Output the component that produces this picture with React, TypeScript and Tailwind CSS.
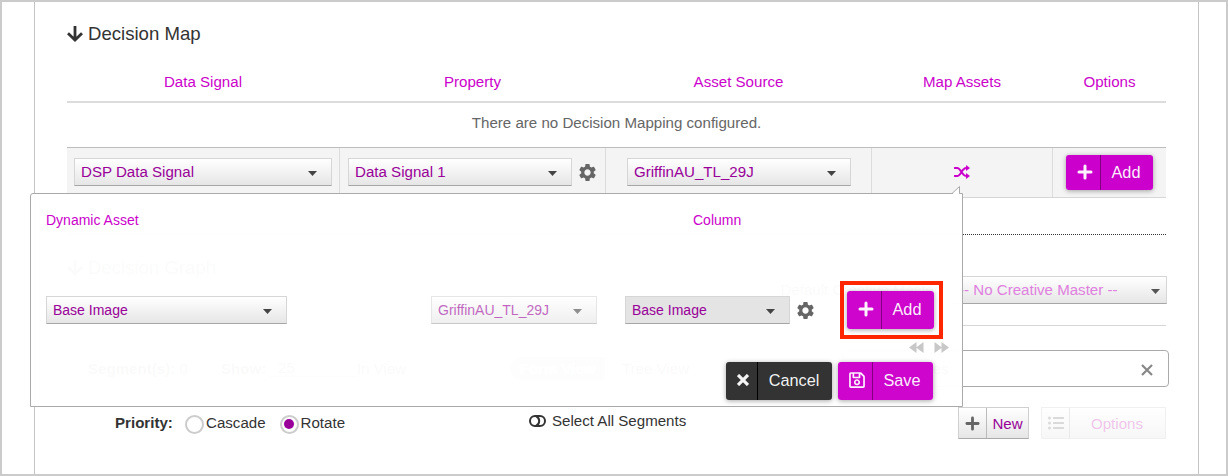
import React from "react";
import clsx from "clsx";
import { MdSettings } from "react-icons/md";
import { FaListUl, FaRegSave } from "react-icons/fa";

function ArrowDown() {
  return (
    <svg width="16" height="17" viewBox="0 0 16 17" fill="none" stroke="currentColor" strokeWidth="2.8">
      <path d="M8 0V14M1 7.3L8 14.1L15 7.3" />
    </svg>
  );
}

function Plus({ className }: { className?: string }) {
  return (
    <svg width="16" height="16" viewBox="0 0 16 16" className={className} fill="none" stroke="currentColor" strokeWidth="3" strokeLinecap="round">
      <path d="M8 2V14M2 8H14" />
    </svg>
  );
}

function Shuffle() {
  return (
    <svg width="16" height="14" viewBox="0 0 16 14" fill="none" stroke="currentColor" strokeWidth="2">
      <path d="M0 3H3.2C6.8 3 8 11 12 11H13M0 11H3.2C6.8 11 8 3 12 3H13" />
      <path d="M12 0L16 3L12 6ZM12 8L16 11L12 14Z" fill="currentColor" stroke="none" />
    </svg>
  );
}

function Cross({ className, width = 2 }: { className?: string; width?: number }) {
  return (
    <svg width="12" height="12" viewBox="0 0 12 12" className={className} fill="none" stroke="currentColor" strokeWidth={width}>
      <path d="M1 1L11 11M11 1L1 11" />
    </svg>
  );
}

function ToggleIcon() {
  return (
    <svg width="17" height="12" viewBox="0 0 17 12" fill="none" stroke="currentColor" strokeWidth="2">
      <rect x="1" y="1" width="15" height="10" rx="5" />
      <path d="M7 1C9.2 2.2 10.2 4 10.2 6S9.2 9.8 7 11" />
    </svg>
  );
}

function Select({
  label,
  className,
  disabled,
  flat,
}: {
  label: string;
  className?: string;
  disabled?: boolean;
  flat?: boolean;
}) {
  return (
    <div
      className={clsx(
        "flex h-7 shrink-0 items-center justify-between border border-[#d6d6d6] border-b-[#a6a6a6] pr-[14px] pl-[6px] text-[#990099]",
        flat ? "bg-[#e4e4e4]" : "bg-linear-to-b from-white to-[#e6e6e6]",
        disabled && "opacity-60",
        className
      )}
    >
      <span>{label}</span>
      <svg width="9" height="5" viewBox="0 0 9 5" className="mt-[3px]" fill="#444">
        <path d="M0 0H9L4.5 5Z" />
      </svg>
    </div>
  );
}

function Button({
  icon,
  label,
  className,
  divider,
}: {
  icon: React.ReactNode;
  label: string;
  className?: string;
  divider: string;
}) {
  return (
    <div className={clsx("flex shrink-0 items-stretch rounded-[3px] text-[16.3px] text-white/95 shadow-[0_1px_5px_rgba(0,0,0,0.35)]", className)}>
      <div className={clsx("flex shrink-0 items-center justify-center border-r pb-0.5", divider)}>{icon}</div>
      <div className="flex flex-1 items-center justify-center pr-[2px]">{label}</div>
    </div>
  );
}

function DecisionMap() {
  return (
    <section>
      <h2 className="flex h-[36px] items-center gap-[5px] text-[18.6px] text-[#333]">
        <ArrowDown />
        Decision Map
      </h2>
      <div className="mt-[11px] grid h-[40px] grid-cols-[273px_266px_266px_181px_113px] items-center border-b-2 border-[#dcdcdc] text-center text-[#cc00cc]">
        <div className="pr-px">Data Signal</div>
        <div className="pr-px">Property</div>
        <div className="pr-px">Asset Source</div>
        <div className="pr-px">Map Assets</div>
        <div>Options</div>
      </div>
      <p className="flex h-[44px] items-center justify-center pb-[5px] text-[#666]">
        There are no Decision Mapping configured.
      </p>
      <div className="grid h-[51px] grid-cols-[273px_266px_266px_181px_113px] border-y border-t-[#bdbdbd] border-b-[#d6d6d6] bg-[#f4f4f4]">
        <div className="border-r border-[#dcdcdc] pt-[10px] pl-[7px]">
          <Select label="DSP Data Signal" className="w-[258px]" />
        </div>
        <div className="flex gap-[5px] border-r border-[#dcdcdc] pt-[10px] pl-[8px]">
          <Select label="Data Signal 1" className="w-[224px]" />
          <MdSettings size={21} className="mt-[4px] text-[#666]" />
        </div>
        <div className="border-r border-[#dcdcdc] pt-[10px] pl-[21px]">
          <Select label="GriffinAU_TL_29J" className="w-[224px]" />
        </div>
        <div className="flex justify-center border-r border-[#dcdcdc] pt-[17px] text-[#cc00cc]">
          <Shuffle />
        </div>
        <div className="pt-[7px] pl-[13px]">
          <Button
            icon={<Plus />}
            label="Add"
            className="h-[35px] w-[87px] bg-[#cc00cc]"
            divider="w-[35px] border-[#800080] pl-1"
          />
        </div>
      </div>
    </section>
  );
}

function Radio({ label, checked }: { label: string; checked?: boolean }) {
  return (
    <label className="flex items-center gap-[2px]">
      <span className="mt-0.5 flex size-[19px] items-center justify-center rounded-full border-[2.5px] border-[#ccc] bg-white">
        {checked && <span className="size-[10px] rounded-full bg-[#990099]" />}
      </span>
      <span>{label}</span>
    </label>
  );
}

function DecisionGraph() {
  return (
    <section className="mt-[36px] border-t border-dotted border-[#333]">
      <h2 className="mt-[20px] flex h-[26px] items-center gap-[5px] text-[18.6px] text-[#333]">
        <ArrowDown />
        Decision Graph
      </h2>
      <div className="-mt-[5px] flex h-[28px] items-center justify-end gap-[14px]">
        <span>Default Creative Master</span>
        <div className="-mr-px flex h-7 w-[214px] items-center justify-between border border-[#d6d6d6] border-b-[#a6a6a6] bg-linear-to-b from-white to-[#e6e6e6] pr-[6px] pl-[5px] text-[#df80df]">
          <span>-- No Creative Master --</span>
          <svg width="9" height="5" viewBox="0 0 9 5" className="mt-0.5" fill="#555">
            <path d="M0 0H9L4.5 5Z" />
          </svg>
        </div>
      </div>
      <div className="mt-[21px] border-b border-[#d6d6d6]" />
      <div className="-mr-[3px] mt-[24px] flex h-[37px] items-center pl-[21px]">
        <span className="w-[133px] shrink-0"><b>Segment(s):</b> 0</span>
        <b className="w-[49px] shrink-0">Show:</b>
        <span className="w-[87px] shrink-0 border-b border-[#999] pl-2">25</span>
        <span className="w-[153px] shrink-0">In View</span>
        <span className="flex h-[23px] w-[95px] shrink-0 items-center justify-center rounded-l-full bg-[#aaa] font-bold text-white">Form View</span>
        <span className="w-[80px] shrink-0 pl-[17px]">Tree View</span>
        <div className="ml-auto flex h-full w-[327px] items-center justify-between rounded-[4px] border border-[#aaa] pr-[15px] pl-[15px]">
          <span>Search Rules</span>
          <Cross className="mt-0.5 text-[#888]" width={2.2} />
        </div>
      </div>
      <div className="mt-[20px] flex h-[32px] items-center pl-[48px] text-[#333]">
        <b className="w-[70px]">Priority:</b>
        <div className="flex w-[344px] gap-[14px]">
          <Radio label="Cascade" />
          <Radio label="Rotate" checked />
        </div>
        <div className="mb-1 flex flex-1 items-center gap-[6px]">
          <ToggleIcon />
          <span>Select All Segments</span>
        </div>
        <div className="mr-3 flex h-8 w-[71px] border border-[#d0d0d0] border-b-[#aaa] bg-linear-to-b from-white to-[#e6e6e6] text-[#990099]">
          <div className="flex w-[28px] items-center justify-center border-r border-[#bbb] text-[#666]">
            <Plus className="size-[15px]" />
          </div>
          <div className="flex flex-1 items-center justify-center pt-0.5">New</div>
        </div>
        <div className="flex h-8 w-[125px] border border-[#d0d0d0] bg-linear-to-b from-white to-[#e6e6e6] text-[#cc44bb] opacity-30">
          <div className="flex w-[28px] items-center justify-center border-r border-[#bbb] text-[#888]">
            <FaListUl size={16} />
          </div>
          <div className="flex flex-1 items-center justify-center pt-0.5 pr-px">Options</div>
        </div>
      </div>
    </section>
  );
}

function AssetPopover() {
  return (
    <div className="absolute top-[193px] left-[30px] h-[214px] w-[933px] rounded-tl-[3px] border border-[#aaa] bg-white/98 text-sm">
      <svg width="10" height="9" viewBox="0 0 10 9" className="absolute -top-[8px] right-0" fill="none">
        <path d="M0 8.5L7.5 1V9H0Z" fill="white" />
        <path d="M0 7.5L7.5 0.5V7.5H10" stroke="#aaa" />
      </svg>
      <div className="flex h-[52px] items-center pl-[15px] text-[#cc00cc]">
        <div className="w-[647px]">Dynamic Asset</div>
        <div>Column</div>
      </div>
      <div className="mt-[35px] flex h-[58px] items-center pl-[15px]">
        <Select label="Base Image" className="w-[241px]" />
        <Select label="GriffinAU_TL_29J" className="ml-[144px] w-[166px]" disabled />
        <Select label="Base Image" className="ml-[28px] w-[165px]" flat />
        <MdSettings size={21} className="ml-[5px] text-[#666]" />
        <div className="ml-[24px] flex h-[58px] w-[103px] items-center justify-center border-4 border-[#ff2600] pr-0.5">
          <Button
            icon={<Plus />}
            label="Add"
            className="h-[38px] w-[87px] bg-[#cc00cc]/98"
            divider="w-[35px] border-[#800080] pl-1"
          />
        </div>
      </div>
      <div className="mt-[3px] flex h-[11px] justify-end gap-[10px] pr-[13px] text-[#c8c8c8]">
        <svg width="15" height="11" viewBox="0 0 15 11" fill="currentColor">
          <path d="M0 5.5L7.5 0V11ZM7 5.5L14.5 0V11Z" />
        </svg>
        <svg width="15" height="11" viewBox="0 0 15 11" fill="currentColor">
          <path d="M0.5 0L8 5.5L0.5 11ZM7.5 0L15 5.5L7.5 11Z" />
        </svg>
      </div>
      <div className="mt-[9px] flex justify-end gap-[6px] pr-[29px]">
        <Button
          icon={<Cross width={3.2} />}
          label="Cancel"
          className="h-[38px] w-[106px] bg-[#333]"
          divider="w-[32px] border-black pl-[3px]"
        />
        <Button
          icon={<FaRegSave size={18} />}
          label="Save"
          className="h-[38px] w-[95px] bg-[#cc00cc]/98"
          divider="w-[35px] border-[#800080] pl-[3px]"
        />
      </div>
    </div>
  );
}

export default function App() {
  return (
    <main className="relative h-[476px] w-[1228px] overflow-hidden border-2 border-[#cbcbcb] bg-white font-['Liberation_Sans',Arial,sans-serif] text-[15.1px] leading-none whitespace-nowrap">
      <div className="ml-8 h-full w-[1165px] border-x border-[#c4c4c4] px-8 pt-[14px]">
        <DecisionMap />
        <DecisionGraph />
      </div>
      <div className="absolute -top-0.5 -left-0.5">
        <AssetPopover />
      </div>
    </main>
  );
}
